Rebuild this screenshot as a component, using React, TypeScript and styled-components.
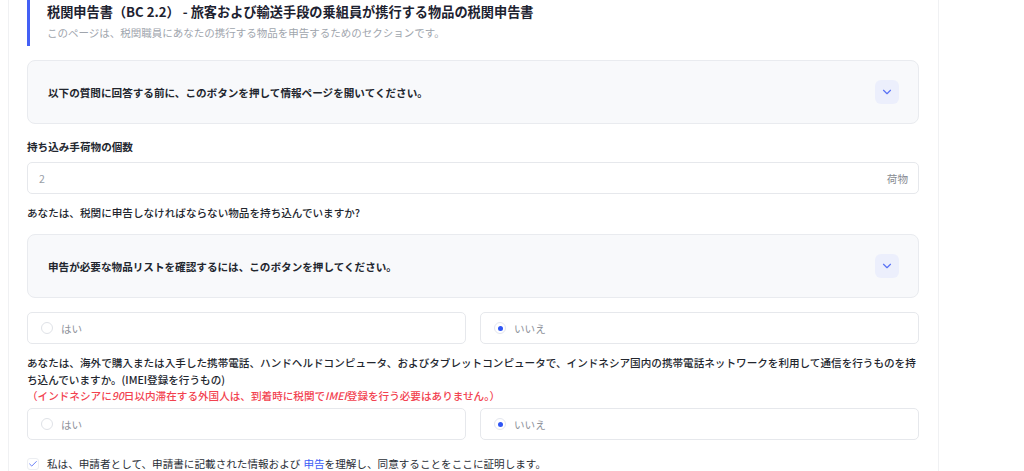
import styled, { createGlobalStyle } from "styled-components";
import { ChevronDown, Check } from "lucide-react";

const GlobalStyle = createGlobalStyle`
  html, body {
    margin: 0;
    padding: 0;
    background: #ffffff;
  }
  body {
    font-family: "Noto Sans CJK JP", "Noto Sans", "Liberation Sans", sans-serif;
    color: #1f2430;
    -webkit-font-smoothing: antialiased;
  }
`;

const Page = styled.div`
  width: 1024px;
  height: 471px;
  overflow: hidden;
  padding-left: 8px;
  box-sizing: border-box;
`;

const Card = styled.div`
  width: 931px;
  box-sizing: border-box;
  border-left: 1px solid #f0f1f3;
  border-right: 1px solid #f0f1f3;
  padding: 0 19px 0 18px;
  min-height: 471px;
`;

const Header = styled.div`
  border-left: 3px solid #4460f5;
  padding: 3px 0 5px 17px;
  margin-bottom: 14px;
`;

const Title = styled.h1`
  margin: 0;
  font-size: 13.2px;
  line-height: 18px;
  font-weight: 700;
  color: #1d2230;
`;

const Subtitle = styled.p`
  margin: 4px 0 0;
  font-size: 10.5px;
  line-height: 16px;
  color: #a0a5ad;
`;

const Accordion = styled.div`
  display: flex;
  align-items: center;
  justify-content: space-between;
  height: 64px;
  box-sizing: border-box;
  padding: 0 19px 0 20px;
  background: #f8f9fb;
  border: 1px solid #e9ebef;
  border-radius: 8px;
`;

const AccordionText = styled.span`
  font-size: 10.6px;
  font-weight: 700;
  color: #22262e;
`;

const ChevronButton = styled.span`
  width: 24px;
  height: 24px;
  border-radius: 6px;
  background: #eceffc;
  display: flex;
  align-items: center;
  justify-content: center;
  color: #5a72f5;
`;

const Label = styled.div<{ $mt: number; $mb: number; $weight?: number }>`
  margin-top: ${(p) => p.$mt}px;
  margin-bottom: ${(p) => p.$mb}px;
  font-size: 10.6px;
  line-height: 17px;
  font-weight: ${(p) => p.$weight ?? 700};
  color: #22262e;
`;

const Notice = styled.span`
  display: block;
  line-height: 15px;
  color: #f2424f;
  font-weight: 500;

  em {
    font-style: italic;
  }
`;

const InputBox = styled.div`
  display: flex;
  align-items: center;
  justify-content: space-between;
  height: 32px;
  box-sizing: border-box;
  padding: 0 10px 0 11px;
  border: 1px solid #e6e8ec;
  border-radius: 5px;
  font-size: 10.6px;
`;

const InputValue = styled.span`
  color: #9a9fa8;
`;

const Suffix = styled.span`
  color: #878b92;
`;

const RadioRow = styled.div<{ $mt: number }>`
  display: grid;
  grid-template-columns: 1fr 1fr;
  gap: 14px;
  margin-top: ${(p) => p.$mt}px;
`;

const RadioOption = styled.label`
  display: flex;
  align-items: center;
  gap: 8px;
  height: 32px;
  box-sizing: border-box;
  padding: 0 13px;
  border: 1px solid #e6e8ec;
  border-radius: 5px;
  font-size: 10.6px;
  color: #8e929a;
`;

const RadioDot = styled.span<{ $checked?: boolean }>`
  width: 12px;
  height: 12px;
  box-sizing: border-box;
  border-radius: 50%;
  border: 1px solid ${(p) => (p.$checked ? "#e3e6ee" : "#dfe2e7")};
  display: flex;
  align-items: center;
  justify-content: center;

  &::after {
    content: "";
    width: 5px;
    height: 5px;
    border-radius: 50%;
    background: ${(p) => (p.$checked ? "#2f55f4" : "transparent")};
  }
`;

const Consent = styled.div`
  display: flex;
  align-items: center;
  gap: 8px;
  margin-top: 16px;
  font-size: 10.6px;
  color: #2a2e36;
`;

const CheckBox = styled.span`
  width: 12px;
  height: 12px;
  box-sizing: border-box;
  border: 1px solid #eceef2;
  border-radius: 3px;
  display: flex;
  align-items: center;
  justify-content: center;
  color: #5a72f5;
`;

const Link = styled.span`
  color: #3c5cf5;
  margin-left: 3px;
`;

function Radios({ mt }: { mt: number }) {
  return (
    <RadioRow $mt={mt}>
      <RadioOption>
        <RadioDot />
        はい
      </RadioOption>
      <RadioOption>
        <RadioDot $checked />
        いいえ
      </RadioOption>
    </RadioRow>
  );
}

export default function App() {
  return (
    <Page>
      <GlobalStyle />
      <Card>
        <Header>
          <Title>税関申告書（BC 2.2） - 旅客および輸送手段の乗組員が携行する物品の税関申告書</Title>
          <Subtitle>このページは、税関職員にあなたの携行する物品を申告するためのセクションです。</Subtitle>
        </Header>

        <Accordion>
          <AccordionText>以下の質問に回答する前に、このボタンを押して情報ページを開いてください。</AccordionText>
          <ChevronButton>
            <ChevronDown size={14} strokeWidth={2} />
          </ChevronButton>
        </Accordion>

        <Label $mt={14} $mb={7}>持ち込み手荷物の個数</Label>
        <InputBox>
          <InputValue>2</InputValue>
          <Suffix>荷物</Suffix>
        </InputBox>

        <Label $mt={10} $mb={13} $weight={500}>
          あなたは、税関に申告しなければならない物品を持ち込んでいますか?
        </Label>

        <Accordion>
          <AccordionText>申告が必要な物品リストを確認するには、このボタンを押してください。</AccordionText>
          <ChevronButton>
            <ChevronDown size={14} strokeWidth={2} />
          </ChevronButton>
        </Accordion>

        <Radios mt={14} />

        <Label $mt={10} $mb={0} $weight={500}>
          あなたは、海外で購入または入手した携帯電話、ハンドヘルドコンピュータ、およびタブレットコンピュータで、インドネシア国内の携帯電話ネットワークを利用して通信を行うものを持
          <br />
          ち込んでいますか。(IMEI登録を行うもの)
          <Notice>
            （インドネシアに<em>90</em>日以内滞在する外国人は、到着時に税関で<em>IMEI</em>登録を行う必要はありません。）
          </Notice>
        </Label>

        <Radios mt={5} />

        <Consent>
          <CheckBox>
            <Check size={10} strokeWidth={2.2} />
          </CheckBox>
          <span>
            私は、申請者として、申請書に記載された情報および<Link>申告</Link>を理解し、同意することをここに証明します。
          </span>
        </Consent>
      </Card>
    </Page>
  );
}
